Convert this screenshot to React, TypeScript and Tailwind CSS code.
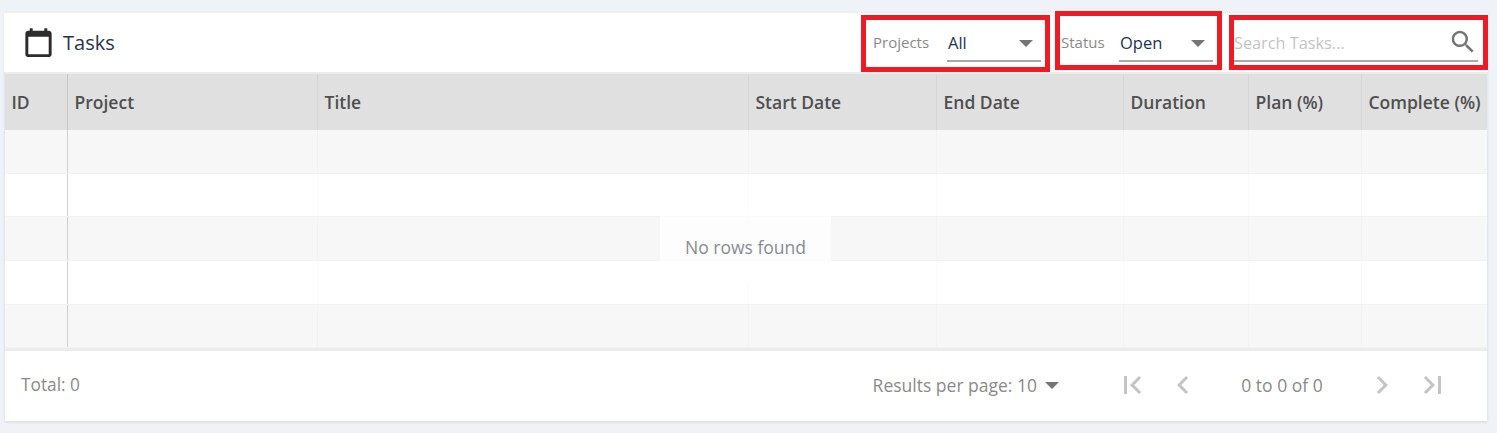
import React from "react";

const columns = [
  { label: "ID", w: "w-[63px]" },
  { label: "Project", w: "w-[250px]" },
  { label: "Title", w: "w-[431px]" },
  { label: "Start Date", w: "w-[188px]" },
  { label: "End Date", w: "w-[187px]" },
  { label: "Duration", w: "w-[125px]" },
  { label: "Plan (%)", w: "w-[113px]" },
  { label: "Complete (%)", w: "flex-1" },
];

const rowHeights = ["h-[44px] bg-[#f7f7f7]", "h-[43px] bg-white", "h-[44px] bg-[#f7f7f7]", "h-[44px] bg-white", "h-[43px] bg-[#f7f7f7]"];

function Caret({ className = "" }: { className?: string }) {
  return <span className={`block h-0 w-0 border-x-[7px] border-t-[7px] border-x-transparent border-t-[#757575] ${className}`} />;
}

function RedBox({ className }: { className: string }) {
  return <div className={`pointer-events-none absolute border-[5px] border-[#ed1c24] ${className}`} />;
}

function Filter({ label, value, labelW }: { label: string; value: string; labelW: string }) {
  return (
    <div className="flex items-center">
      <span className={`text-[15px] text-[#8a8a8a] ${labelW}`}>{label}</span>
      <div className="flex h-[39px] w-[94px] items-center justify-between border-b-2 border-[#a8a8a8] pl-[1px] pr-[8px] pt-[3px]">
        <span className="text-[16.5px] text-[#1b3350]">{value}</span>
        <Caret />
      </div>
    </div>
  );
}

function Pager({ d }: { d: string }) {
  return (
    <svg width="36" height="36" viewBox="0 0 24 24" fill="#c4c4c4">
      <path d={d} />
    </svg>
  );
}

export default function App() {
  return (
    <div className="h-[433px] w-[1497px] overflow-hidden bg-[#eff3f7] pl-[5px] pt-[13px] font-['Open_Sans',sans-serif]">
      <div className="relative h-[408px] w-[1482px] bg-white shadow-[0_1px_3px_rgba(0,0,0,0.12)]">
        <header className="-mx-[1px] flex h-[59px] items-center bg-white pl-[17px]">
          <svg width="35" height="35" viewBox="0 0 24 24" fill="#2b2b2b" className="mr-[7px]">
            <path d="M19 4h-1V2.200h-2V4H8V2.200H6V4H5C3.900 4 3 4.900 3 6v14c0 1.100.9 2 2 2h14c1.100 0 2-.9 2-2V6c0-1.100-.9-2-2-2zm0 16H5V8h14v12z" />
          </svg>
          <h1 className="text-[20px] font-normal text-[#2b3345]">Tasks</h1>
          <div className="ml-auto flex h-full items-center pr-[10px]">
            <div className="mr-[20px]">
              <Filter label="Projects" value="All" labelW="w-[74px]" />
            </div>
            <div className="mr-[21px]">
              <Filter label="Status" value="Open" labelW="w-[58px]" />
            </div>
            <div className="flex h-[39px] w-[244px] items-center justify-between border-b-2 border-[#a8a8a8] pt-[3px]">
              <span className="text-[16.3px] text-[#c4c4c4]">Search Tasks...</span>
              <svg width="30" height="30" viewBox="0 0 24 24" fill="#757575" className="mt-[-3px]">
                <path d="M15.500 14h-.79l-.28-.27C15.410 12.590 16 11.110 16 9.500 16 5.910 13.090 3 9.500 3S3 5.910 3 9.500 5.910 16 9.500 16c1.610 0 3.090-.59 4.230-1.570l.27.28v.79l5 4.990L20.490 19l-4.990-5zm-6 0C7.010 14 5 11.990 5 9.500S7.010 5 9.500 5 14 7.010 14 9.500 11.990 14 9.500 14z" />
              </svg>
            </div>
          </div>
        </header>

        <RedBox className="left-[856px] top-[2px] h-[57px] w-[189px]" />
        <RedBox className="left-[1050px] top-[-2px] h-[59px] w-[167px]" />
        <RedBox className="left-[1224px] top-[2px] h-[55px] w-[259px]" />

        <div className="h-[2px] bg-[#ececec]" />

        <div className="flex h-[56px] bg-[#e0e0e0]">
          {columns.map((c, i) => (
            <div
              key={c.label}
              className={`flex items-center whitespace-nowrap pl-[6.500px] text-[17.500px] font-semibold text-[#4f4f4f] ${c.w} ${i === 0 ? "border-r border-[#c8c8c8]" : i < columns.length - 1 ? "border-r border-[#d6d6d6]" : ""}`}
            >
              {c.label}
            </div>
          ))}
        </div>

        <div className="relative">
          {rowHeights.map((r, i) => (
            <div key={i} className={`flex border-b border-[#f2f2f2] ${r}`}>
              {columns.map((c, j) => (
                <div
                  key={c.label}
                  className={`${c.w} ${j === 0 ? "border-r border-[#cfcfcf]" : j < columns.length - 1 ? "border-r border-black/[0.02]" : ""}`}
                />
              ))}
            </div>
          ))}
          <div className="absolute left-[655px] top-[80px] flex h-[75px] w-[171px] items-center justify-center bg-white/70 text-[17.500px] text-[#868c94]">
            No rows found
          </div>
        </div>

        <div className="h-[3px] bg-[#ececec]" />

        <footer className="flex h-[70px] items-center pb-[2px] pl-[16px] text-[17.500px] text-[#8a8a8a]">
          <span className="text-[17.300px]">Total: 0</span>
          <div className="ml-auto flex items-center pr-[37px]">
            <span>Results per page: 10</span>
            <Caret className="ml-[8px] mr-[56px]" />
            <Pager d="M6 6h2v12H6zM17.410 7.410 16 6l-6 6 6 6 1.410-1.410L12.830 12z" />
            <span className="w-[14px]" />
            <Pager d="M15.410 7.410 14 6l-6 6 6 6 1.410-1.410L10.830 12z" />
            <span className="w-[163px] pr-[1px] text-center">0 to 0 of 0</span>
            <Pager d="M8.590 16.590 10 18l6-6-6-6-1.410 1.410L13.170 12z" />
            <span className="w-[14px]" />
            <Pager d="M6.590 7.410 8 6l6 6-6 6-1.410-1.410L11.170 12zM16 6h2v12h-2z" />
          </div>
        </footer>
      </div>
    </div>
  );
}
